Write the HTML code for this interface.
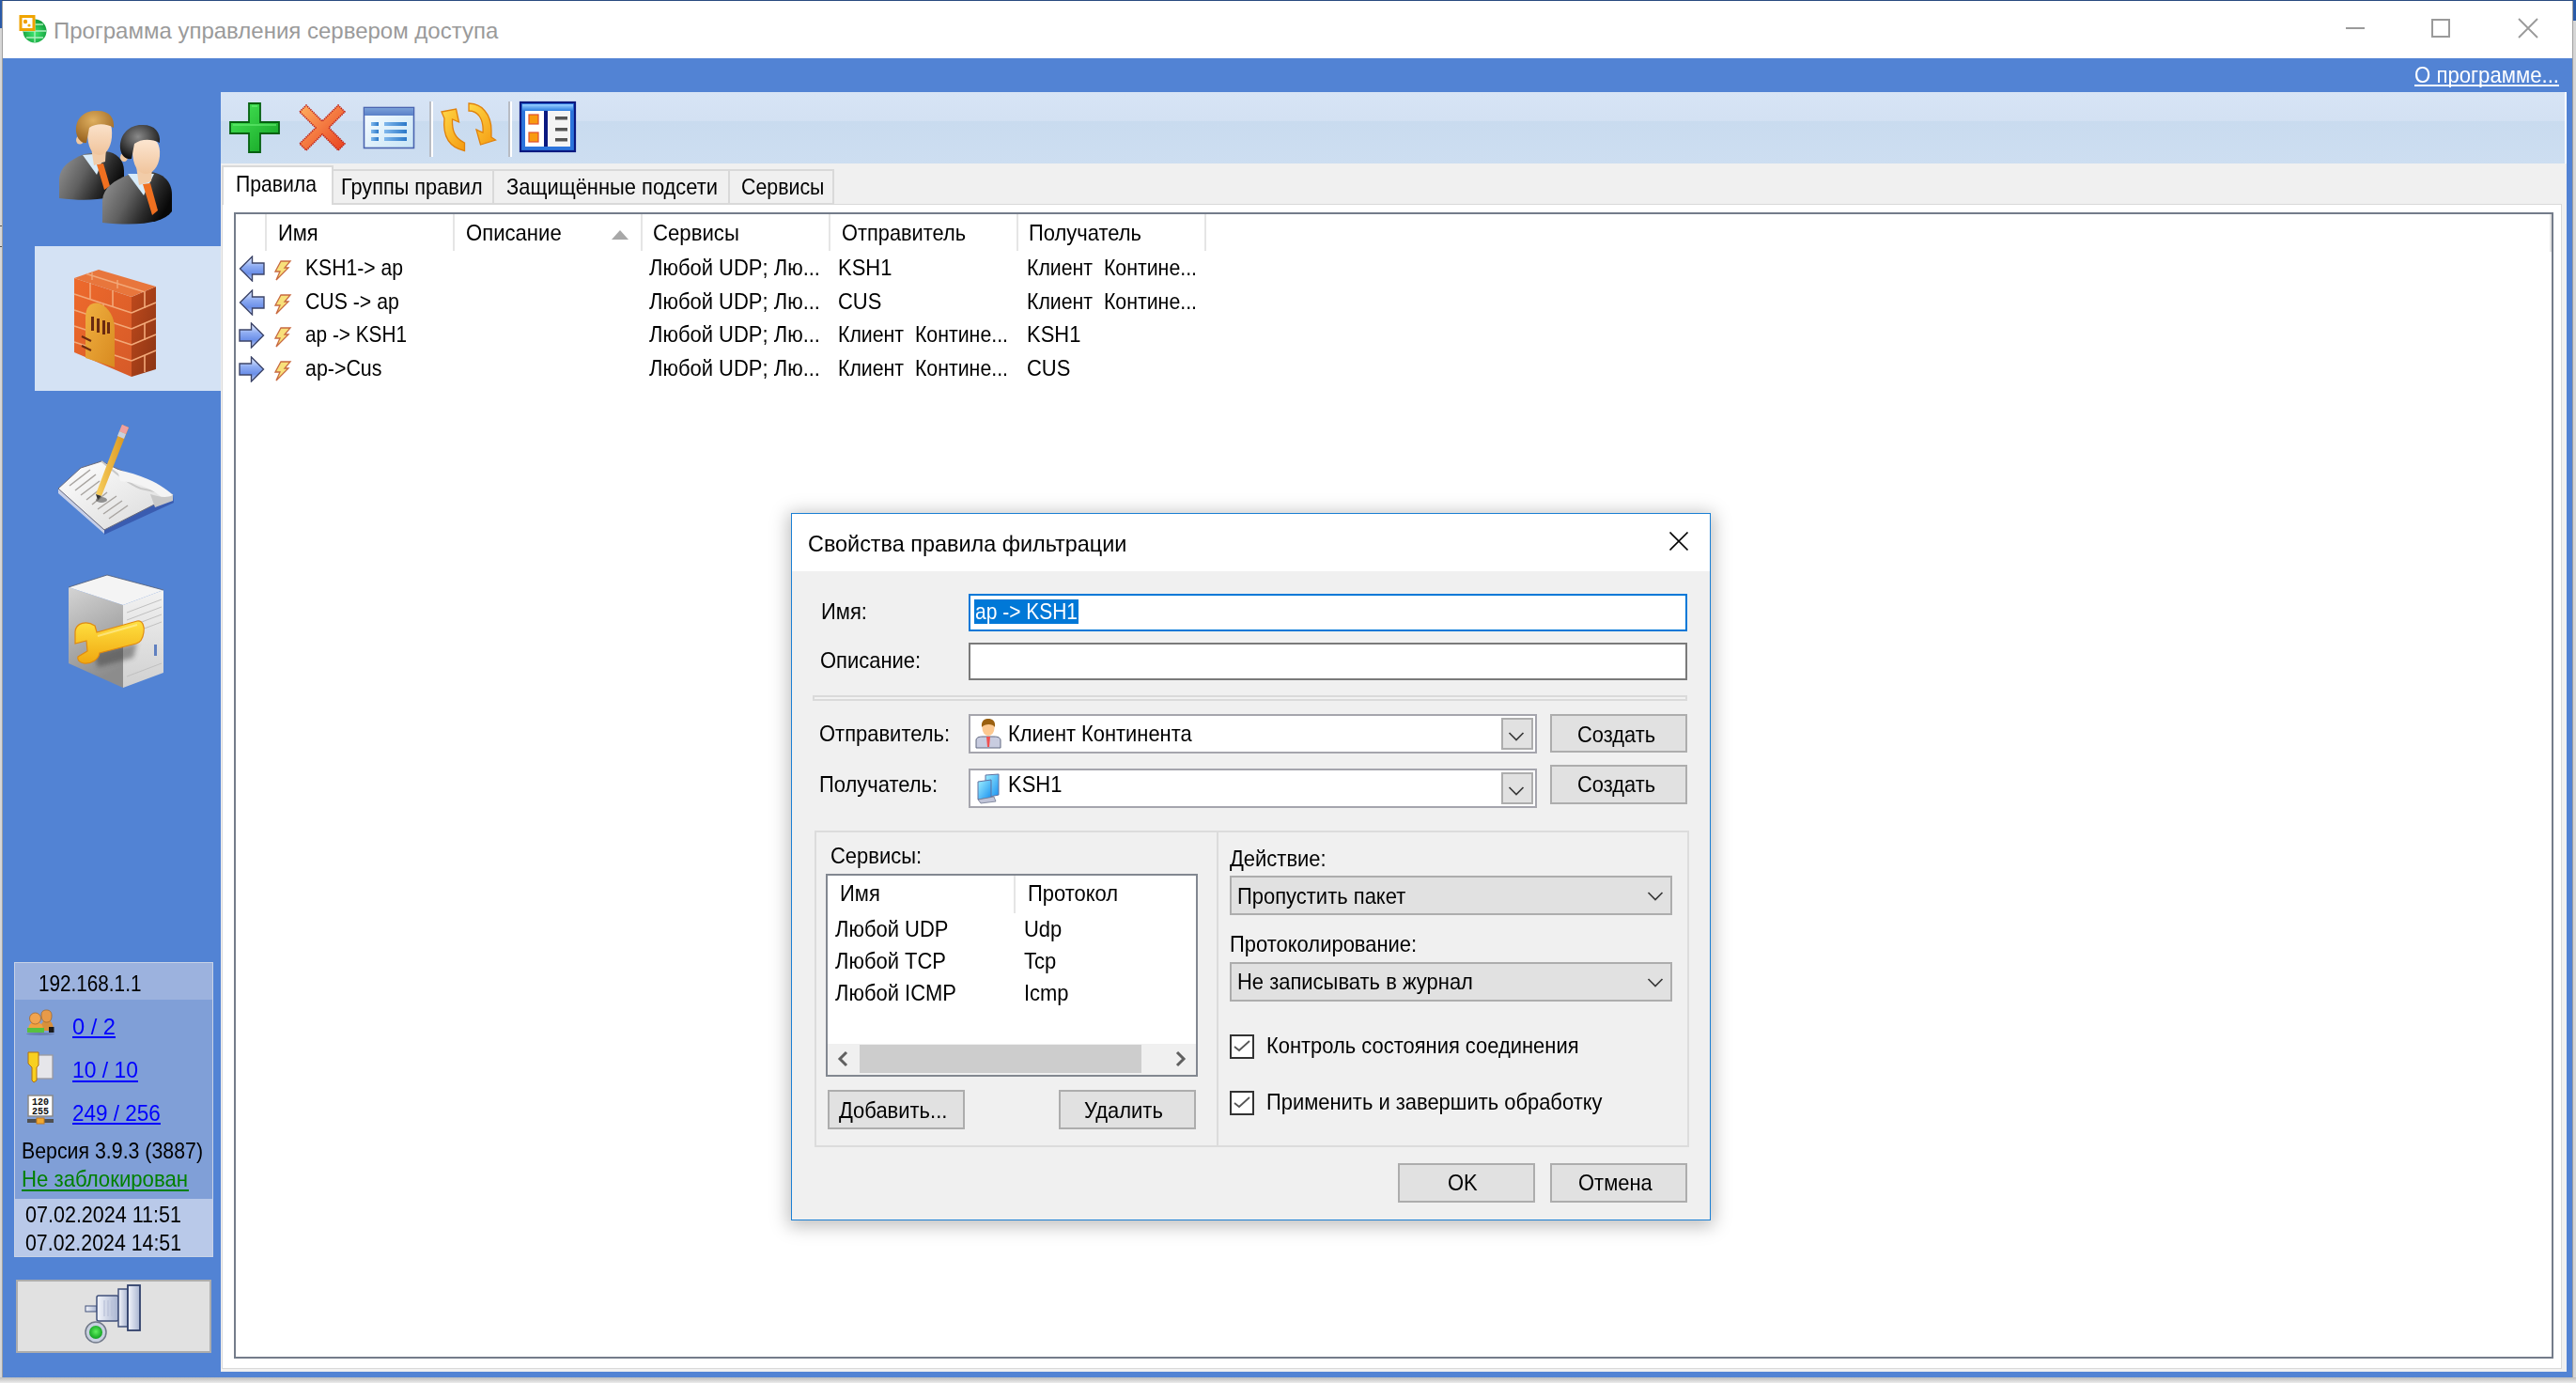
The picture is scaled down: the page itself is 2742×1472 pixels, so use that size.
<!DOCTYPE html>
<html><head><meta charset="utf-8">
<style>
html,body{margin:0;padding:0;width:2742px;height:1472px;overflow:hidden;background:#fff;}
body{position:relative;font-family:"Liberation Sans",sans-serif;}
.t{position:absolute;white-space:pre;line-height:1;transform-origin:0 0;}
.r{position:absolute;box-sizing:border-box;}
</style></head><body>
<div class="r" style="left:0px;top:0px;width:2742px;height:1472px;background:#d6d6d6"></div>
<div class="r" style="left:0px;top:1466px;width:2742px;height:6px;background:linear-gradient(#bdbdbd,#ececec)"></div>
<div class="r" style="left:0px;top:0px;width:2742px;height:2px;background:#2a4a80"></div>
<div class="r" style="left:0px;top:0px;width:2px;height:30px;background:#2a5aa8"></div>
<div class="r" style="left:2739px;top:0px;width:3px;height:22px;background:#2a5aa8"></div>
<div class="r" style="left:0px;top:240px;width:3px;height:23px;border:1px solid #555;border-left:none"></div>
<div class="r" style="left:2px;top:1px;width:2737px;height:1465px;background:#a0a0a0"></div>
<div class="r" style="left:3px;top:1px;width:2735px;height:61px;background:#ffffff"></div>
<div class="r" style="left:3px;top:62px;width:2735px;height:1404px;background:#5283d4"></div>
<div class="t" style="left:57.0px;top:20.7px;font-size:24px;color:#9a9a9a;">Программа управления сервером доступа</div>
<div class="r" style="left:2497px;top:29px;width:20px;height:2px;background:#9a9a9a"></div>
<div class="r" style="left:2588px;top:20px;width:20px;height:20px;border:2px solid #9a9a9a"></div>
<svg class="r" style="left:2680px;top:19px" width="22" height="22" viewBox="0 0 22 22"><path d="M1 1L21 21M21 1L1 21" stroke="#9a9a9a" stroke-width="1.8"/></svg>
<div class="t" style="left:2569.5px;top:67.7px;font-size:24px;color:#ffffff;transform:scaleX(0.9231);">О программе...</div>
<div class="r" style="left:2570px;top:90px;width:154px;height:2px;background:#ffffff"></div>
<div class="r" style="left:37px;top:262px;width:198px;height:154px;background:#d4e2f4"></div>
<div class="r" style="left:15px;top:1024px;width:212px;height:314px;background:#c9d3e6"></div>
<div class="r" style="left:16px;top:1025px;width:210px;height:39px;background:#9cb2de"></div>
<div class="r" style="left:16px;top:1064px;width:210px;height:212px;background:#809fd7"></div>
<div class="r" style="left:16px;top:1276px;width:210px;height:61px;background:#b9c9e9"></div>
<div class="t" style="left:40.6px;top:1035.2px;font-size:24px;color:#000;transform:scaleX(0.8630);">192.168.1.1</div>
<div class="t" style="left:77.0px;top:1080.7px;font-size:24px;color:#0000ff;transform:scaleX(0.9849);">0 / 2</div>
<div class="r" style="left:77px;top:1103px;width:46px;height:2px;background:#0000ff"></div>
<div class="t" style="left:77.0px;top:1127.2px;font-size:24px;color:#0000ff;transform:scaleX(0.9538);">10 / 10</div>
<div class="r" style="left:77px;top:1150px;width:70px;height:2px;background:#0000ff"></div>
<div class="t" style="left:77.0px;top:1172.7px;font-size:24px;color:#0000ff;transform:scaleX(0.9373);">249 / 256</div>
<div class="r" style="left:77px;top:1195px;width:94px;height:2px;background:#0000ff"></div>
<div class="t" style="left:23.4px;top:1213.2px;font-size:24px;color:#000;transform:scaleX(0.8886);">Версия 3.9.3 (3887)</div>
<div class="t" style="left:23.4px;top:1242.7px;font-size:24px;color:#008000;transform:scaleX(0.9236);">Не заблокирован</div>
<div class="r" style="left:23px;top:1266px;width:178px;height:2px;background:#008000"></div>
<div class="t" style="left:27.0px;top:1281.0px;font-size:24px;color:#000;transform:scaleX(0.8971);">07.02.2024 11:51</div>
<div class="t" style="left:27.0px;top:1310.5px;font-size:24px;color:#000;transform:scaleX(0.8886);">07.02.2024 14:51</div>
<div class="r" style="left:17px;top:1362px;width:208px;height:78px;background:#e1e1e1;border:2px solid #adadad"></div>
<div class="r" style="left:235px;top:98px;width:2497px;height:76px;background:linear-gradient(#d7e4f5 0%,#d3e1f3 40%,#c9dbef 41%,#cddef1 100%);border-right:2px solid #fff"></div>
<div class="r" style="left:457px;top:108px;width:4px;height:59px;background:#b8bcc4;border-right:2px solid #fff"></div>
<div class="r" style="left:541px;top:108px;width:4px;height:59px;background:#b8bcc4;border-right:2px solid #fff"></div>
<div class="r" style="left:235px;top:174px;width:2497px;height:1286px;background:#f0f0f0"></div>
<div class="r" style="left:236px;top:217px;width:2491px;height:1240px;background:#ffffff;border:1px solid #d9d9d9;border-top:none"></div>
<div class="r" style="left:237px;top:217px;width:2489px;height:1239px;background:#ffffff"></div>
<div class="r" style="left:353px;top:180px;width:173px;height:38px;background:#f0f0f0;border:2px solid #d9d9d9"></div>
<div class="r" style="left:524px;top:180px;width:253px;height:38px;background:#f0f0f0;border:2px solid #d9d9d9"></div>
<div class="r" style="left:775px;top:180px;width:113px;height:38px;background:#f0f0f0;border:2px solid #d9d9d9"></div>
<div class="r" style="left:236px;top:217px;width:2491px;height:1px;background:#d9d9d9"></div>
<div class="r" style="left:236px;top:176px;width:119px;height:42px;background:#ffffff;border:2px solid #d9d9d9;border-bottom:none"></div>
<div class="t" style="left:251.0px;top:183.7px;font-size:24px;color:#000;transform:scaleX(0.8826);">Правила</div>
<div class="t" style="left:362.8px;top:186.9px;font-size:24px;color:#000;transform:scaleX(0.9045);">Группы правил</div>
<div class="t" style="left:539.0px;top:186.9px;font-size:24px;color:#000;transform:scaleX(0.9123);">Защищённые подсети</div>
<div class="t" style="left:789.0px;top:186.9px;font-size:24px;color:#000;transform:scaleX(0.8891);">Сервисы</div>
<div class="r" style="left:249px;top:226px;width:2469px;height:1220px;border:2px solid #747c8a;background:#fff"></div>
<div class="r" style="left:282px;top:228px;width:2px;height:39px;background:#e5e5e5"></div>
<div class="r" style="left:482px;top:228px;width:2px;height:39px;background:#e5e5e5"></div>
<div class="r" style="left:682px;top:228px;width:2px;height:39px;background:#e5e5e5"></div>
<div class="r" style="left:882px;top:228px;width:2px;height:39px;background:#e5e5e5"></div>
<div class="r" style="left:1082px;top:228px;width:2px;height:39px;background:#e5e5e5"></div>
<div class="r" style="left:1282px;top:228px;width:2px;height:39px;background:#e5e5e5"></div>
<div class="r" style="left:2714px;top:228px;width:2px;height:40px;background:#e5e5e5"></div>
<div class="t" style="left:296.0px;top:235.7px;font-size:24px;color:#000;transform:scaleX(0.9134);">Имя</div>
<div class="t" style="left:495.5px;top:235.7px;font-size:24px;color:#000;transform:scaleX(0.9210);">Описание</div>
<svg class="r" style="left:651px;top:244px" width="18" height="11" viewBox="0 0 18 11"><path d="M0 11L9 1L18 11Z" fill="#a8a8a8"/></svg>
<div class="t" style="left:695.0px;top:235.7px;font-size:24px;color:#000;transform:scaleX(0.9233);">Сервисы</div>
<div class="t" style="left:895.9px;top:235.7px;font-size:24px;color:#000;transform:scaleX(0.9085);">Отправитель</div>
<div class="t" style="left:1095.0px;top:235.7px;font-size:24px;color:#000;transform:scaleX(0.9149);">Получатель</div>
<div class="t" style="left:324.6px;top:273.0px;font-size:24px;color:#000;transform:scaleX(0.8808);">KSH1-&gt; ap</div>
<div class="t" style="left:690.7px;top:273.0px;font-size:24px;color:#000;transform:scaleX(0.9159);">Любой UDP; Лю...</div>
<div class="t" style="left:891.9px;top:273.0px;font-size:24px;color:#000;transform:scaleX(0.9150);">KSH1</div>
<div class="t" style="left:1092.5px;top:273.0px;font-size:24px;color:#000;transform:scaleX(0.8876);">Клиент  Контине...</div>
<div class="t" style="left:324.6px;top:308.7px;font-size:24px;color:#000;transform:scaleX(0.8854);">CUS -&gt; ap</div>
<div class="t" style="left:690.7px;top:308.7px;font-size:24px;color:#000;transform:scaleX(0.9159);">Любой UDP; Лю...</div>
<div class="t" style="left:891.9px;top:308.7px;font-size:24px;color:#000;transform:scaleX(0.9150);">CUS</div>
<div class="t" style="left:1092.5px;top:308.7px;font-size:24px;color:#000;transform:scaleX(0.8876);">Клиент  Контине...</div>
<div class="t" style="left:324.6px;top:344.4px;font-size:24px;color:#000;transform:scaleX(0.8657);">ap -&gt; KSH1</div>
<div class="t" style="left:690.7px;top:344.4px;font-size:24px;color:#000;transform:scaleX(0.9159);">Любой UDP; Лю...</div>
<div class="t" style="left:891.9px;top:344.4px;font-size:24px;color:#000;transform:scaleX(0.8876);">Клиент  Контине...</div>
<div class="t" style="left:1092.5px;top:344.4px;font-size:24px;color:#000;transform:scaleX(0.9150);">KSH1</div>
<div class="t" style="left:324.6px;top:380.1px;font-size:24px;color:#000;transform:scaleX(0.8908);">ap-&gt;Cus</div>
<div class="t" style="left:690.7px;top:380.1px;font-size:24px;color:#000;transform:scaleX(0.9159);">Любой UDP; Лю...</div>
<div class="t" style="left:891.9px;top:380.1px;font-size:24px;color:#000;transform:scaleX(0.8876);">Клиент  Контине...</div>
<div class="t" style="left:1092.5px;top:380.1px;font-size:24px;color:#000;transform:scaleX(0.9150);">CUS</div>
<div class="r" style="left:842px;top:546px;width:979px;height:753px;box-shadow:0 3px 18px 3px rgba(0,0,0,0.26);background:#f0f0f0;border:1px solid #1a7fd4"></div>
<div class="r" style="left:843px;top:547px;width:977px;height:61px;background:#ffffff"></div>
<div class="t" style="left:859.5px;top:567.3px;font-size:24px;color:#000;transform:scaleX(0.9751);">Свойства правила фильтрации</div>
<svg class="r" style="left:1776px;top:565px" width="22" height="22" viewBox="0 0 22 22"><path d="M1.5 1.5L20.5 20.5M20.5 1.5L1.5 20.5" stroke="#000" stroke-width="1.7"/></svg>
<div class="t" style="left:873.5px;top:639.3px;font-size:24px;color:#000;transform:scaleX(0.9150);">Имя:</div>
<div class="r" style="left:1031px;top:632px;width:765px;height:40px;background:#fff;border:2px solid #0078d7"></div>
<div class="r" style="left:1037px;top:638px;width:111px;height:26px;background:#0078d7"></div>
<div class="t" style="left:1037.5px;top:639.3px;font-size:24px;color:#fff;transform:scaleX(0.8737);">ap -&gt; KSH1</div>
<div class="t" style="left:872.7px;top:691.3px;font-size:24px;color:#000;transform:scaleX(0.9150);">Описание:</div>
<div class="r" style="left:1031px;top:684px;width:765px;height:40px;background:#fff;border:2px solid #7a7a7a"></div>
<div class="r" style="left:865px;top:740px;width:931px;height:6px;border:2px solid #dadada;background:#f2f2f2"></div>
<div class="t" style="left:872.0px;top:768.7px;font-size:24px;color:#000;transform:scaleX(0.9150);">Отправитель:</div>
<div class="r" style="left:1031px;top:760px;width:605px;height:42px;background:#fff;border:2px solid #a5a5ad"></div>
<div class="r" style="left:1598px;top:764px;width:34px;height:34px;background:#e1e1e1;border:2px solid #adadad"></div>
<svg class="r" style="left:1605px;top:778px" width="18" height="12" viewBox="0 0 18 12"><path d="M1.5 2L9 9.5L16.5 2" stroke="#383838" stroke-width="1.7" fill="none"/></svg>
<div class="t" style="left:1073.0px;top:768.7px;font-size:24px;color:#000;transform:scaleX(0.9116);">Клиент Континента</div>
<div class="r" style="left:1650px;top:760px;width:146px;height:41px;background:#e1e1e1;border:2px solid #adadad"></div>
<div class="t" style="left:1679.0px;top:770.1px;font-size:24px;color:#000;transform:scaleX(0.9102);">Создать</div>
<div class="t" style="left:872.0px;top:823.3px;font-size:24px;color:#000;transform:scaleX(0.9150);">Получатель:</div>
<div class="r" style="left:1031px;top:818px;width:605px;height:42px;background:#fff;border:2px solid #a5a5ad"></div>
<div class="r" style="left:1598px;top:822px;width:34px;height:34px;background:#e1e1e1;border:2px solid #adadad"></div>
<svg class="r" style="left:1605px;top:836px" width="18" height="12" viewBox="0 0 18 12"><path d="M1.5 2L9 9.5L16.5 2" stroke="#383838" stroke-width="1.7" fill="none"/></svg>
<div class="t" style="left:1073.0px;top:823.3px;font-size:24px;color:#000;transform:scaleX(0.9150);">KSH1</div>
<div class="r" style="left:1650px;top:814px;width:146px;height:42px;background:#e1e1e1;border:2px solid #adadad"></div>
<div class="t" style="left:1679.0px;top:823.3px;font-size:24px;color:#000;transform:scaleX(0.9102);">Создать</div>
<div class="r" style="left:867px;top:884px;width:430px;height:337px;border:2px solid #dcdcdc"></div>
<div class="r" style="left:1295px;top:884px;width:503px;height:337px;border:2px solid #dcdcdc"></div>
<div class="t" style="left:884.0px;top:898.7px;font-size:24px;color:#000;transform:scaleX(0.9150);">Сервисы:</div>
<div class="r" style="left:879px;top:930px;width:396px;height:216px;background:#fff;border:2px solid #828790"></div>
<div class="r" style="left:1079px;top:932px;width:2px;height:40px;background:#e5e5e5"></div>
<div class="t" style="left:893.8px;top:939.1px;font-size:24px;color:#000;transform:scaleX(0.9150);">Имя</div>
<div class="t" style="left:1094.3px;top:939.1px;font-size:24px;color:#000;transform:scaleX(0.9150);">Протокол</div>
<div class="t" style="left:888.6px;top:976.9px;font-size:24px;color:#000;transform:scaleX(0.9150);">Любой UDP</div>
<div class="t" style="left:1090.4px;top:976.9px;font-size:24px;color:#000;transform:scaleX(0.9150);">Udp</div>
<div class="t" style="left:888.6px;top:1011.0px;font-size:24px;color:#000;transform:scaleX(0.9150);">Любой TCP</div>
<div class="t" style="left:1090.4px;top:1011.0px;font-size:24px;color:#000;transform:scaleX(0.9150);">Tcp</div>
<div class="t" style="left:888.6px;top:1045.1px;font-size:24px;color:#000;transform:scaleX(0.9150);">Любой ICMP</div>
<div class="t" style="left:1090.4px;top:1045.1px;font-size:24px;color:#000;transform:scaleX(0.9150);">Icmp</div>
<div class="r" style="left:881px;top:1111px;width:392px;height:33px;background:#f0f0f0"></div>
<div class="r" style="left:915px;top:1112px;width:300px;height:30px;background:#cdcdcd"></div>
<svg class="r" style="left:889px;top:1118px" width="16" height="18" viewBox="0 0 16 18"><path d="M12 2L5 9L12 16" stroke="#606060" stroke-width="3" fill="none"/></svg>
<svg class="r" style="left:1249px;top:1118px" width="16" height="18" viewBox="0 0 16 18"><path d="M4 2L11 9L4 16" stroke="#606060" stroke-width="3" fill="none"/></svg>
<div class="r" style="left:881px;top:1160px;width:146px;height:42px;background:#e1e1e1;border:2px solid #adadad"></div>
<div class="t" style="left:893.3px;top:1169.5px;font-size:24px;color:#000;transform:scaleX(0.9150);">Добавить...</div>
<div class="r" style="left:1127px;top:1160px;width:146px;height:42px;background:#e1e1e1;border:2px solid #adadad"></div>
<div class="t" style="left:1154.2px;top:1169.5px;font-size:24px;color:#000;transform:scaleX(0.9150);">Удалить</div>
<div class="t" style="left:1309.3px;top:901.7px;font-size:24px;color:#000;transform:scaleX(0.9150);">Действие:</div>
<div class="r" style="left:1309px;top:932px;width:471px;height:42px;background:#e1e1e1;border:2px solid #adadad"></div>
<div class="t" style="left:1317.4px;top:942.1px;font-size:24px;color:#000;transform:scaleX(0.9150);">Пропустить пакет</div>
<svg class="r" style="left:1753px;top:948px" width="18" height="12" viewBox="0 0 18 12"><path d="M1.5 2L9 9.5L16.5 2" stroke="#383838" stroke-width="1.7" fill="none"/></svg>
<div class="t" style="left:1309.0px;top:993.4px;font-size:24px;color:#000;transform:scaleX(0.9150);">Протоколирование:</div>
<div class="r" style="left:1309px;top:1024px;width:471px;height:42px;background:#e1e1e1;border:2px solid #adadad"></div>
<div class="t" style="left:1317.4px;top:1032.8px;font-size:24px;color:#000;transform:scaleX(0.9150);">Не записывать в журнал</div>
<svg class="r" style="left:1753px;top:1040px" width="18" height="12" viewBox="0 0 18 12"><path d="M1.5 2L9 9.5L16.5 2" stroke="#383838" stroke-width="1.7" fill="none"/></svg>
<div class="r" style="left:1309px;top:1101px;width:26px;height:26px;background:#fff;border:2px solid #333"></div>
<svg class="r" style="left:1312px;top:1105px" width="20" height="18" viewBox="0 0 20 18"><path d="M2 9L7 13L18 3" stroke="#555" stroke-width="1.8" fill="none"/></svg>
<div class="t" style="left:1347.5px;top:1100.7px;font-size:24px;color:#000;transform:scaleX(0.9135);">Контроль состояния соединения</div>
<div class="r" style="left:1309px;top:1161px;width:26px;height:26px;background:#fff;border:2px solid #333"></div>
<svg class="r" style="left:1312px;top:1165px" width="20" height="18" viewBox="0 0 20 18"><path d="M2 9L7 13L18 3" stroke="#555" stroke-width="1.8" fill="none"/></svg>
<div class="t" style="left:1347.5px;top:1160.7px;font-size:24px;color:#000;transform:scaleX(0.9138);">Применить и завершить обработку</div>
<div class="r" style="left:1488px;top:1238px;width:146px;height:42px;background:#e1e1e1;border:2px solid #adadad"></div>
<div class="t" style="left:1541.0px;top:1246.7px;font-size:24px;color:#000;transform:scaleX(0.9150);">OK</div>
<div class="r" style="left:1650px;top:1238px;width:146px;height:42px;background:#e1e1e1;border:2px solid #adadad"></div>
<div class="t" style="left:1680.0px;top:1246.7px;font-size:24px;color:#000;transform:scaleX(0.9150);">Отмена</div>
<svg class="r" style="left:55px;top:110px" width="140" height="140" viewBox="0 0 140 140">
<defs>
<linearGradient id="suit1" x1="0" y1="0.1" x2="1" y2="0.5"><stop offset="0" stop-color="#959595"/><stop offset="0.45" stop-color="#606060"/><stop offset="0.75" stop-color="#2a2a2a"/><stop offset="1" stop-color="#080808"/></linearGradient>
<linearGradient id="skin" x1="0" y1="0" x2="0" y2="1"><stop offset="0" stop-color="#fde8d4"/><stop offset="1" stop-color="#f0c49c"/></linearGradient>
<radialGradient id="hair1" cx="0.45" cy="0.3" r="0.7"><stop offset="0" stop-color="#e0b060"/><stop offset="1" stop-color="#9a6420"/></radialGradient>
<radialGradient id="hair2" cx="0.45" cy="0.35" r="0.7"><stop offset="0" stop-color="#8a8a8a"/><stop offset="1" stop-color="#0a0a0a"/></radialGradient>
</defs>
<g transform="translate(-55,-110)">
<!-- person 1 (back) -->
<path d="M63 211 L63 190 C64 178 74 170 90 164 L112 161 C124 162 132 170 132 182 L132 203 C122 212 95 215 63 211Z" fill="url(#suit1)"/>
<path d="M88 165 L103 186 L112 163 Z" fill="#d8ecfa"/>
<path d="M103 175 L110 174 L117 198 L111 202Z" fill="#f07020"/>
<path d="M97 157 L113 157 L112 172 L100 176 Z" fill="#f2cca8"/>
<path d="M93 140 C93 128 100 125 107 125 C116 125 120 132 119 146 C118 158 112 165 106 165 C98 165 93 157 93 140Z" fill="url(#skin)"/>
<ellipse cx="85" cy="149" rx="4" ry="4.5" fill="#f0c8a0"/>
<path d="M81 140 C80 124 92 117 104 118 C117 118 122 126 121 136 C113 131 102 131 95 136 L92 152 C88 153 82 149 81 140Z" fill="url(#hair1)"/>
<!-- person 2 (front) -->
<path d="M109 237 L109 213 C110 200 121 192 137 186 L160 183 C173 184 183 193 183 207 L183 225 C174 237 150 241 109 237Z" fill="url(#suit1)"/>
<path d="M136 185 L153 208 L164 185 Z" fill="#d8ecfa"/>
<path d="M152 196 L160 195 L168 224 L162 229Z" fill="#f07020"/>
<path d="M145 177 L162 177 L161 193 L148 197 Z" fill="#f2cca8"/>
<path d="M141 160 C141 149 149 146 156 146 C166 146 171 153 170 166 C169 178 162 185 155 185 C147 185 141 176 141 160Z" fill="url(#skin)"/>
<ellipse cx="132" cy="167.5" rx="4" ry="4.5" fill="#f0c8a0"/>
<path d="M128 158 C127 141 140 132 152 133 C165 133 171 141 170 152 C160 147 150 148 143 153 L140 169 C134 170 129 166 128 158Z" fill="url(#hair2)"/>
</g></svg>
<svg class="r" style="left:70px;top:280px" width="110" height="130" viewBox="0 0 110 130">
<defs>
<linearGradient id="fwL" x1="0" y1="0" x2="1" y2="1"><stop offset="0" stop-color="#ee6a2c"/><stop offset="1" stop-color="#d65a28"/></linearGradient>
<linearGradient id="fwR" x1="0" y1="0" x2="1" y2="1"><stop offset="0" stop-color="#c04a1c"/><stop offset="1" stop-color="#8a3414"/></linearGradient>
<linearGradient id="door" x1="0" y1="0" x2="1" y2="1"><stop offset="0" stop-color="#f0b040"/><stop offset="1" stop-color="#d88a20"/></linearGradient>
</defs>
<g transform="translate(-70,-280)">
<path d="M79 296 L140 316 L140 401 L79 375Z" fill="url(#fwL)"/>
<path d="M140 316 L166 305 L166 393 L140 401Z" fill="url(#fwR)"/>
<path d="M79 296 L105 287 L166 305 L140 316Z" fill="#e8763c"/><path d="M92 291.5 L153 310.5 M98 289.5 L98 298 M125 298 L125 307" stroke="#f2a878" stroke-width="1.4"/>
<g stroke="#f2a878" stroke-width="1.6" fill="none">
<path d="M79 313 L140 333 M79 330 L140 350 M79 347 L140 367 M79 364 L140 384"/>
<path d="M140 333 L166 322 M140 350 L166 339 M140 367 L166 356 M140 384 L166 373"/>
<path d="M96 301 L96 319 M120 309 L120 326 M110 324 L110 340 M154 310 L154 328 M154 344 L154 362 M154 378 L154 396"/>
</g>
<path d="M91 381 L91 338 C91 325 98 321 106 323 C116 327 122 338 122 350 L122 391Z" fill="url(#door)"/>
<g fill="#6a2a10"><rect x="97" y="337" width="3" height="15"/><rect x="103" y="339" width="3" height="15"/><rect x="109" y="341" width="3" height="15"/><rect x="114" y="343" width="3" height="12"/></g>
<path d="M87 358 L97 363 M87 368 L97 373" stroke="#6a2a10" stroke-width="2"/>
</g></svg>
<svg class="r" style="left:55px;top:445px" width="140" height="130" viewBox="0 0 140 130">
<defs>
<linearGradient id="pg" x1="0" y1="0" x2="1" y2="1"><stop offset="0" stop-color="#ffffff"/><stop offset="1" stop-color="#d8d8d8"/></linearGradient>
<linearGradient id="pencil" x1="0" y1="0" x2="1" y2="0"><stop offset="0" stop-color="#f8d060"/><stop offset="1" stop-color="#d89018"/></linearGradient>
</defs>
<g transform="translate(-55,-445)">
<path d="M62 520 L111 564 L111 568 L62 525Z" fill="#c8d0e8"/><path d="M111 564 L184 527 L185 535 L111 569Z" fill="#3a5cb0"/>
<path d="M62 520 L86 498 L108 491 L184 527 L111 564Z" fill="url(#pg)" stroke="#6a6a7a" stroke-width="1"/>
<path d="M108 491 C120 500 135 515 150 520 L184 527" fill="none" stroke="#c8c8c8" stroke-width="2"/>
<g stroke="#a8a4a0" stroke-width="1.5">
<path d="M74 517 L96 500 M80 522 L102 505 M86 527 L106 512 M92 532 L110 518 M98 537 L114 524 M104 542 L124 528 M110 547 L130 533 M116 552 L136 538"/>
</g>
<path d="M125 500 C150 505 172 515 184 527 L176 533 C165 522 150 514 128 512Z" fill="#f4f4f4"/><path d="M160 526 C168 528 176 531 184 527 L184 533 L165 540Z" fill="#c8c8c8"/>
<path d="M130 452 L137 455 L108 528 L102 526Z" fill="url(#pencil)"/>
<path d="M130 452 L137 455 L134 462 L127 459Z" fill="#f0a0a0"/>
<path d="M127 459 L134 462 L132 467 L125 464Z" fill="#c8d0e0"/>
<path d="M102 526 L108 528 L104 532Z" fill="#333"/>
<ellipse cx="108" cy="532" rx="6" ry="3" fill="#444" opacity="0.55"/>
</g></svg>
<svg class="r" style="left:65px;top:605px" width="120" height="135" viewBox="0 0 120 135">
<defs>
<linearGradient id="svL" x1="0" y1="0" x2="0.3" y2="1"><stop offset="0" stop-color="#d4d4d4"/><stop offset="1" stop-color="#8c8c8c"/></linearGradient>
<linearGradient id="svR" x1="0" y1="0" x2="0" y2="1"><stop offset="0" stop-color="#f2f2f2"/><stop offset="1" stop-color="#d0d0d0"/></linearGradient>
<linearGradient id="wr" x1="0" y1="0" x2="0" y2="1"><stop offset="0" stop-color="#ffe040"/><stop offset="1" stop-color="#f0a810"/></linearGradient>
</defs>
<g transform="translate(-65,-605)">
<path d="M73 625 L131 644 L131 732 L73 706Z" fill="url(#svL)"/>
<path d="M131 644 L174 628 L174 716 L131 732Z" fill="url(#svR)"/>
<path d="M73 625 L114 612 L174 628 L131 644Z" fill="#f4f4f4"/>
<path d="M73 625 L114 612 L174 628" fill="none" stroke="#505a70" stroke-width="1" opacity="0.8"/>
<g stroke="#c0c0c0" stroke-width="1"><path d="M135 652 L172 638 M135 660 L172 646 M135 668 L172 654 M135 676 L172 662 M135 720 L172 706"/></g>
<rect x="164" y="686" width="3" height="12" fill="#6080c0"/>
<filter id="wblur" x="-50%" y="-50%" width="200%" height="200%"><feGaussianBlur stdDeviation="2.5"/></filter><path d="M100 694 L146 684 L142 700 L104 710Z" fill="#303030" opacity="0.45" filter="url(#wblur)"/>
<path d="M80 672 C81 663 92 660 101 666 L103 673 L146 661 C152 660 154 667 153 673 C152 680 149 684 145 685 L106 695 C105 702 97 707 89 706 C84 705 82 702 83 699 L93 693 L92 682 L80 685 Z" fill="url(#wr)" stroke="#e08a10" stroke-width="1.2"/>
<path d="M104 677 L146 665" stroke="#fff4b0" stroke-width="2" opacity="0.55"/>
</g></svg>
<svg class="r" style="left:85px;top:1362px" width="70" height="78" viewBox="0 0 70 78">
<defs><linearGradient id="plug" x1="0" y1="0" x2="1" y2="0"><stop offset="0" stop-color="#f4f6fc"/><stop offset="1" stop-color="#a8b4d0"/></linearGradient>
<radialGradient id="led" cx="0.5" cy="0.45" r="0.55"><stop offset="0" stop-color="#60f060"/><stop offset="1" stop-color="#10a020"/></radialGradient></defs>
<g transform="translate(-85,-1362)">
<rect x="91" y="1390" width="12" height="6" fill="url(#plug)" stroke="#40507a" stroke-width="1"/>
<rect x="103" y="1379" width="23" height="27" rx="2" fill="url(#plug)" stroke="#40507a" stroke-width="1.5"/><path d="M111 1384 L111 1401 M115 1384 L115 1401 M119 1384 L119 1401" stroke="#b8c0d8" stroke-width="1.2"/>
<rect x="126" y="1372" width="10" height="40" fill="url(#plug)" stroke="#40507a" stroke-width="1.5"/>
<rect x="136" y="1368" width="13" height="48" fill="url(#plug)" stroke="#30406a" stroke-width="1.8"/>
<circle cx="102" cy="1418" r="11" fill="#c8d0e0" stroke="#707888" stroke-width="1.5"/>
<circle cx="102" cy="1418" r="7" fill="url(#led)"/>
</g></svg>
<svg class="r" style="left:240px;top:104px" width="65" height="65" viewBox="0 0 65 65">
<defs><linearGradient id="gplus" x1="0" y1="0" x2="1" y2="1"><stop offset="0" stop-color="#48e858"/><stop offset="1" stop-color="#12a022"/></linearGradient></defs>
<g transform="translate(-240,-104)">
<path d="M265 110 L277 110 L277 130 L297 130 L297 142 L277 142 L277 162 L265 162 L265 142 L245 142 L245 130 L265 130Z" fill="url(#gplus)" stroke="#056010" stroke-width="1.8"/>
<path d="M268 113 L274 113 M248 133 L294 133" stroke="#6ff27a" stroke-width="1.5" opacity="0.7"/>
</g></svg>
<svg class="r" style="left:315px;top:108px" width="56" height="56" viewBox="0 0 56 56">
<defs><linearGradient id="gx" x1="0" y1="0" x2="1" y2="1"><stop offset="0" stop-color="#ffb060"/><stop offset="1" stop-color="#e84020"/></linearGradient></defs>
<g transform="translate(-315,-108)">
<path d="M319 119 L326 112 L343 129 L360 112 L367 119 L350 136 L367 153 L360 160 L343 143 L326 160 L319 153 L336 136Z" fill="url(#gx)" stroke="#c02418" stroke-width="1.6" stroke-dasharray="1.4 0.9"/>
</g></svg>
<svg class="r" style="left:384px;top:111px" width="60" height="52" viewBox="0 0 60 52">
<defs><linearGradient id="lwb" x1="0" y1="0" x2="1" y2="1"><stop offset="0" stop-color="#fafdff"/><stop offset="1" stop-color="#c6e4f6"/></linearGradient>
<linearGradient id="lwt" x1="0" y1="0" x2="0" y2="1"><stop offset="0" stop-color="#7aa0d8"/><stop offset="1" stop-color="#5a80c8"/></linearGradient>
<linearGradient id="lwl" x1="0" y1="0" x2="1" y2="0"><stop offset="0" stop-color="#80b8ec"/><stop offset="1" stop-color="#2a78c8"/></linearGradient></defs>
<g transform="translate(-384,-111)">
<rect x="387.5" y="114.5" width="53" height="43" fill="url(#lwb)" stroke="#4a64b0" stroke-width="1.6"/>
<rect x="388" y="115" width="52" height="8" fill="url(#lwt)"/>
<g fill="url(#lwl)"><rect x="395" y="130" width="8" height="4"/><rect x="395" y="138" width="8" height="4"/><rect x="395" y="146" width="8" height="4"/>
<rect x="409" y="130" width="24" height="4"/><rect x="409" y="138" width="24" height="4"/><rect x="409" y="146" width="24" height="4"/></g>
</g></svg>
<svg class="r" style="left:462px;top:104px" width="72" height="64" viewBox="0 0 72 64">
<defs><linearGradient id="ar" x1="0" y1="0" x2="1" y2="1"><stop offset="0" stop-color="#ffd848"/><stop offset="1" stop-color="#f49a10"/></linearGradient></defs>
<g transform="translate(-462,-104)">
<path d="M470 119 L485.5 116 L488.5 130 L481.5 127 C481 139 484 147 494.5 152 L494.5 160.5 C479 157 471 146 473 126 Z" fill="url(#ar)" stroke="#e0820c" stroke-width="1.3" stroke-linejoin="miter"/>
<path d="M499 110 C512 110 523 121 523 139 L523 146 L527.5 149 L511.5 154 L507 138 L514 141 C515 127 509 118 499 118 Z" fill="url(#ar)" stroke="#e0820c" stroke-width="1.3"/>
</g></svg>
<svg class="r" style="left:550px;top:104px" width="68" height="62" viewBox="0 0 68 62">
<defs><linearGradient id="cwt" x1="0" y1="0" x2="0" y2="1"><stop offset="0" stop-color="#9ad0ff"/><stop offset="1" stop-color="#2c7ce0"/></linearGradient></defs>
<g transform="translate(-550,-104)">
<rect x="554" y="109" width="58" height="52" fill="#2c74dc" stroke="#0a1880" stroke-width="2.2"/>
<rect x="556" y="111" width="54" height="7" fill="url(#cwt)"/>
<rect x="559" y="118" width="20" height="38" fill="#ffffff"/>
<rect x="579" y="118" width="4" height="38" fill="#0a1880"/>
<rect x="583" y="118" width="24" height="38" fill="#f4f4f4"/>
<rect x="563" y="122" width="10" height="10" fill="#f89a10" stroke="#e05030" stroke-width="1.2"/>
<rect x="563" y="141" width="10" height="10" fill="#f89a10" stroke="#e05030" stroke-width="1.2"/>
<g fill="#555"><rect x="591" y="124" width="13" height="3.5"/><rect x="591" y="136" width="13" height="3.5"/><rect x="591" y="147" width="13" height="3.5"/></g>
</g></svg>
<svg class="r" style="left:254px;top:272px" width="28" height="28" viewBox="0 0 28 28"><defs><linearGradient id="ag272" x1="0" y1="0" x2="0" y2="1"><stop offset="0" stop-color="#eef4ff"/><stop offset="0.4" stop-color="#8eacf2"/><stop offset="0.7" stop-color="#6a8ee8"/><stop offset="1" stop-color="#d4def8"/></linearGradient></defs>
<path d="M1.5 14 L14.5 1 L14.5 8 L27 8 L27 20 L14.5 20 L14.5 27Z" fill="url(#ag272)" stroke="#3c4468" stroke-width="1.4" stroke-linejoin="miter"/></svg>
<svg class="r" style="left:291px;top:277px" width="20" height="22" viewBox="0 0 20 22"><path d="M8 1 L18 1 L12 8 L16 8 L3 21 L7 12 L2 12Z" fill="#f8e07a" stroke="#c86a40" stroke-width="1.3"/></svg>
<svg class="r" style="left:254px;top:308px" width="28" height="28" viewBox="0 0 28 28"><defs><linearGradient id="ag308" x1="0" y1="0" x2="0" y2="1"><stop offset="0" stop-color="#eef4ff"/><stop offset="0.4" stop-color="#8eacf2"/><stop offset="0.7" stop-color="#6a8ee8"/><stop offset="1" stop-color="#d4def8"/></linearGradient></defs>
<path d="M1.5 14 L14.5 1 L14.5 8 L27 8 L27 20 L14.5 20 L14.5 27Z" fill="url(#ag308)" stroke="#3c4468" stroke-width="1.4" stroke-linejoin="miter"/></svg>
<svg class="r" style="left:291px;top:313px" width="20" height="22" viewBox="0 0 20 22"><path d="M8 1 L18 1 L12 8 L16 8 L3 21 L7 12 L2 12Z" fill="#f8e07a" stroke="#c86a40" stroke-width="1.3"/></svg>
<svg class="r" style="left:254px;top:343px" width="28" height="28" viewBox="0 0 28 28"><defs><linearGradient id="ag343" x1="0" y1="0" x2="0" y2="1"><stop offset="0" stop-color="#eef4ff"/><stop offset="0.4" stop-color="#8eacf2"/><stop offset="0.7" stop-color="#6a8ee8"/><stop offset="1" stop-color="#d4def8"/></linearGradient></defs>
<path d="M26.5 14 L13.5 1 L13.5 8 L1 8 L1 20 L13.5 20 L13.5 27Z" fill="url(#ag343)" stroke="#3c4468" stroke-width="1.4" stroke-linejoin="miter"/></svg>
<svg class="r" style="left:291px;top:348px" width="20" height="22" viewBox="0 0 20 22"><path d="M8 1 L18 1 L12 8 L16 8 L3 21 L7 12 L2 12Z" fill="#f8e07a" stroke="#c86a40" stroke-width="1.3"/></svg>
<svg class="r" style="left:254px;top:379px" width="28" height="28" viewBox="0 0 28 28"><defs><linearGradient id="ag379" x1="0" y1="0" x2="0" y2="1"><stop offset="0" stop-color="#eef4ff"/><stop offset="0.4" stop-color="#8eacf2"/><stop offset="0.7" stop-color="#6a8ee8"/><stop offset="1" stop-color="#d4def8"/></linearGradient></defs>
<path d="M26.5 14 L13.5 1 L13.5 8 L1 8 L1 20 L13.5 20 L13.5 27Z" fill="url(#ag379)" stroke="#3c4468" stroke-width="1.4" stroke-linejoin="miter"/></svg>
<svg class="r" style="left:291px;top:384px" width="20" height="22" viewBox="0 0 20 22"><path d="M8 1 L18 1 L12 8 L16 8 L3 21 L7 12 L2 12Z" fill="#f8e07a" stroke="#c86a40" stroke-width="1.3"/></svg>
<svg class="r" style="left:1038px;top:765px" width="28" height="32" viewBox="0 0 28 32">
<g transform="translate(-1038,-765)">
<path d="M1039 796 L1039 788 C1039 785 1042 784 1046 784 L1058 784 C1062 784 1065 785 1065 788 L1065 796Z" fill="#c8cce0" stroke="#606880" stroke-width="1"/>
<path d="M1050 784 L1054 784 L1053 795 L1051 795Z" fill="#f05050"/>
<ellipse cx="1052" cy="775" rx="6.5" ry="8" fill="#fcc890"/>
<path d="M1045 774 C1044 766 1049 765 1052 765 C1056 765 1060 767 1059 774 C1057 770 1048 770 1045 774Z" fill="#9a6010"/>
</g></svg>
<svg class="r" style="left:1038px;top:822px" width="28" height="34" viewBox="0 0 28 34">
<defs><linearGradient id="mon" x1="0" y1="0" x2="1" y2="1"><stop offset="0" stop-color="#a0f0ff"/><stop offset="1" stop-color="#1890f0"/></linearGradient></defs>
<g transform="translate(-1038,-822)">
<path d="M1049 825 L1063 824 L1063 846 L1049 849Z" fill="url(#mon)" stroke="#6070a0" stroke-width="1"/>
<path d="M1041 832 L1055 830 L1055 849 L1041 851Z" fill="url(#mon)" stroke="#6070a0" stroke-width="1"/>
<path d="M1041 851 L1058 848 L1060 853 L1044 855Z" fill="#c0c4d8" stroke="#707890" stroke-width="0.8"/>
</g></svg>
<svg class="r" style="left:26px;top:1074px" width="34" height="30" viewBox="0 0 34 30">
<g transform="translate(-26,-1074)">
<ellipse cx="43" cy="1100.5" rx="15" ry="1.5" fill="#506090" opacity="0.5"/>
<path d="M43 1097 C43 1089 46 1086 50 1086 C54 1086 57 1089 57 1097Z" fill="#d8903c"/>
<path d="M44 1080 C44 1076 47 1075 49.5 1075 C53 1075 55 1077 55 1081 C55 1086 53 1088 49.5 1088 C46 1088 44 1085 44 1080Z" fill="#e89a48" stroke="#a06828" stroke-width="0.8"/>
<path d="M30 1097 C30 1090 33 1088 38 1088 C43 1088 46 1090 46 1097Z" fill="#f0a040"/>
<circle cx="37.5" cy="1084" r="6" fill="#f2a450" stroke="#a86a28" stroke-width="0.8"/>
<rect x="29" y="1094" width="18" height="5" fill="#58c040"/>
<rect x="52" y="1093" width="5.5" height="6" fill="#1a1a1a"/>
</g></svg>
<svg class="r" style="left:26px;top:1118px" width="34" height="36" viewBox="0 0 34 36">
<g transform="translate(-26,-1118)">
<rect x="38" y="1123" width="18" height="25" fill="#e6e6ea" stroke="#9a9aa0" stroke-width="1.3"/>
<path d="M30 1120 L41 1120 L41 1134 L39 1136 L39 1150 L36 1152 L34 1150 L34 1136 L30 1132Z" fill="#f8d020" stroke="#b07010" stroke-width="1"/>
</g></svg>
<svg class="r" style="left:26px;top:1164px" width="34" height="36" viewBox="0 0 34 36">
<g transform="translate(-26,-1164)">
<rect x="30" y="1166" width="26" height="22" fill="#ffffff" stroke="#8a8a8a" stroke-width="1.5"/>
<text x="43" y="1176" font-family="Liberation Mono" font-weight="bold" font-size="10.5" text-anchor="middle" fill="#111" textLength="18" lengthAdjust="spacingAndGlyphs">120</text>
<text x="43" y="1186" font-family="Liberation Mono" font-weight="bold" font-size="10.5" text-anchor="middle" fill="#111" textLength="18" lengthAdjust="spacingAndGlyphs">255</text>
<rect x="29" y="1191" width="28" height="4" fill="#505050"/>
<rect x="39" y="1190" width="8" height="6" fill="#f0a830" stroke="#c07a20" stroke-width="1"/>
</g></svg>
<svg class="r" style="left:18px;top:14px" width="36" height="36" viewBox="0 0 36 36">
<defs><radialGradient id="glb" cx="0.5" cy="0.6" r="0.6"><stop offset="0" stop-color="#40e870"/><stop offset="1" stop-color="#109838"/></radialGradient></defs>
<g transform="translate(-18,-14)">
<circle cx="37" cy="33" r="12.5" fill="url(#glb)"/>
<path d="M25 33 L49 33 M37 21 L37 45 M28 26 L46 26 M28 40 L46 40" stroke="#b0f0c0" stroke-width="1.3"/>
<rect x="22" y="17.5" width="14" height="14" fill="#fff" stroke="#f0a400" stroke-width="3"/>
<circle cx="27" cy="23" r="2.2" fill="#f0a000"/><circle cx="31" cy="27" r="1.6" fill="#f0b000"/>
</g></svg>
</body></html>
